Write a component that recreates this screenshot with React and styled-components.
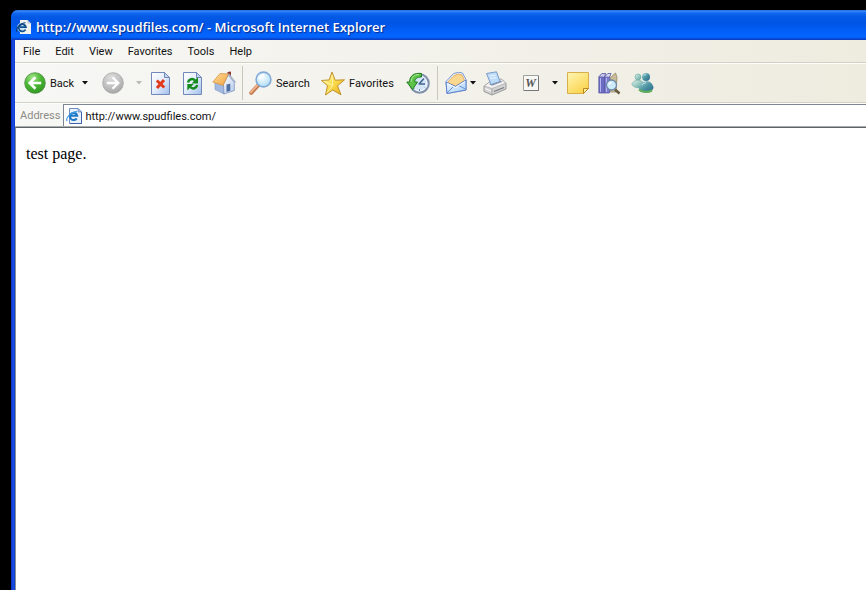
import React from 'react'
import styled, { createGlobalStyle } from 'styled-components'

const GlobalStyle = createGlobalStyle`
  * {
    box-sizing: border-box;
  }
  body {
    margin: 0;
    background: #000;
    overflow: hidden;
  }
  button, input {
    font-family: inherit;
    font-size: inherit;
    color: inherit;
  }
`

// black desktop that shows around the window
const Desktop = styled.div`
  height: 100vh;
  display: flex;
  padding: 10px 0 0 11px;
`

const Window = styled.div`
  flex: 1;
  min-width: 0;
  display: flex;
  flex-direction: column;
  overflow: hidden;
  border-top-left-radius: 7px;
  background: linear-gradient(90deg, #0a2ab8 0, #1c4fe6 2px, #0b3bd0 4px);
  font-family: Roboto, "Noto Sans", sans-serif;
  font-size: 11px;
  color: #111;
`

// ******* Title bar ********
const TitleBar = styled.header`
  flex: none;
  height: 30px;
  display: flex;
  align-items: center;
  gap: 4px;
  padding: 4px 0 0 5px;
  background: linear-gradient(
    #1b5fd8 0,
    #3c8cf8 1px,
    #1268f0 3px,
    #0358e4 7px,
    #0055e5 14px,
    #0261fb 22px,
    #0466ff 27px,
    #0845cf 29px,
    #0a3cc0 30px
  );
`

const Title = styled.h1`
  margin: 0;
  font-family: "Open Sans", "Noto Sans", sans-serif;
  font-size: 13px;
  line-height: 18px;
  font-weight: 600;
  color: #fff;
  text-shadow: 1px 1px 1px #0a2a8a;
  white-space: nowrap;
`

const Chrome = styled.div`
  flex: none;
  margin-left: 4px;
  background: linear-gradient(90deg, #f7f7f5 0, #f3f2ec 45%, #eeecdf 100%);
`

// ******* Menu ********
const MenuBar = styled.nav`
  height: 23px;
  display: flex;
  gap: 1px;
  padding-left: 1px;
  border-bottom: 1px solid #d3d1c3;
`

const MenuItem = styled.button`
  padding: 1px 7px 0;
  border: none;
  background: none;
  line-height: 21px;
`

// ******* Toolbar ********
const Toolbar = styled.div`
  height: 40px;
  display: flex;
  align-items: center;
  padding-left: 5px;
  border-top: 1px solid #fdfdfb;
  border-bottom: 1px solid #d3d1c3;
`

const ToolButton = styled.button`
  flex: none;
  width: ${(props) => props.$width}px;
  height: 34px;
  display: flex;
  align-items: center;
  justify-content: ${(props) => (props.$text ? 'flex-start' : 'center')};
  gap: 4px;
  padding: 0 0 0 ${(props) => (props.$text ? 4 : 0)}px;
  border: none;
  background: none;
  white-space: nowrap;

  svg {
    flex: none;
  }
`

const Separator = styled.span`
  flex: none;
  width: 1px;
  height: 34px;
  margin: 0 ${(props) => props.$after}px 0 2px;
  background: #c9c7b8;
`

// ******* Address ********
const AddressBar = styled.form`
  height: 24px;
  display: flex;
  border-top: 1px solid #fdfdfb;
  border-bottom: 1px solid #a9adab;
`

const AddressLabel = styled.label`
  padding: 0 3px 0 5px;
  line-height: 24px;
  color: #8c8b85;
`

const AddressBox = styled.div`
  flex: 1;
  display: flex;
  align-items: center;
  gap: 3px;
  padding-left: 2px;
  border-top: 1px solid #7d8794;
  border-left: 1px solid #7d8794;
  background: #fff;
`

const AddressInput = styled.input`
  flex: 1;
  min-width: 0;
  height: 20px;
  padding: 2px 0 0;
  border: none;
  outline: none;
  background: none;
`

const Page = styled.main`
  flex: 1;
  margin-left: 4px;
  padding: 16px 10px;
  border-top: 1px solid #5d6468;
  border-left: 1px solid #8a8f96;
  background: #fff;
  font-family: "Liberation Serif", serif;
  font-size: 16px;
  line-height: 20px;
  color: #000;
`

const Paragraph = styled.p`
  margin: 0;
`

const PageIcon = () => (
  <svg width="16" height="16" viewBox="0 0 16 16" aria-hidden="true">
    <path d="M3.500 .5h8.500l3.500 3.500v11.500h-12z" fill="#eaf1fb" stroke="#6d8cc4" />
    <path d="M4 15.500h11.500V4" fill="none" stroke="#3d62a8" />
    <path d="M12 .5V4h3.500z" fill="#a9c0e8" stroke="#5a7cba" strokeWidth=".6" />
    <path d="M10.700 10.400a3.600 3.600 0 1 1 .5-2.600H4.800" fill="none" stroke="#1f78c4" strokeWidth="2.100" />
    <path d="M1.200 13C-1 10.500 5 3.800 11 3.600" fill="none" stroke="#3b9ae0" strokeWidth="1.200" />
  </svg>
)

// darker variant without an outline for the blue title bar
const TitleIcon = () => (
  <svg width="16" height="16" viewBox="0 0 16 16" aria-hidden="true">
    <path d="M4 1h7.500L15 4.500V15H4z" fill="#f2f3ee" />
    <path d="M11.500 1v3.500H15z" fill="#b8c4d8" />
    <circle cx="6" cy="8.500" r="4.800" fill="#cfe6f8" />
    <path d="M9.500 10.600a3.600 3.600 0 1 1 .4-2.500H4" fill="none" stroke="#12508e" strokeWidth="1.800" />
    <path d="M1 13C-1 10.500 4 3.800 9.500 3.800" fill="none" stroke="#0d3f7c" strokeWidth="1.100" />
  </svg>
)

const Arrow = ({ color = '#111' }) => (
  <svg width="6" height="4" viewBox="0 0 6 4" aria-hidden="true">
    <path d="M0 0h6L3 3.500z" fill={color} />
  </svg>
)

const BackIcon = () => (
  <svg width="22" height="22" viewBox="0 0 23 23" aria-hidden="true">
    <defs>
      <radialGradient id="back" cx=".38" cy=".25" r=".8">
        <stop offset="0" stopColor="#a2e686" />
        <stop offset=".5" stopColor="#4cb835" />
        <stop offset="1" stopColor="#2f9422" />
      </radialGradient>
    </defs>
    <circle cx="11.500" cy="11.500" r="10.800" fill="url(#back)" stroke="#4b8c42" strokeWidth=".8" />
    <path d="M12 5.500l-6 6 6 6M6.500 11.500H18" fill="none" stroke="#fff" strokeWidth="2.800" />
  </svg>
)

const ForwardIcon = () => (
  <svg width="22" height="22" viewBox="0 0 23 23" aria-hidden="true">
    <defs>
      <radialGradient id="forward" cx=".4" cy=".25" r=".8">
        <stop offset="0" stopColor="#dcdcdc" />
        <stop offset=".6" stopColor="#bfbfbf" />
        <stop offset="1" stopColor="#a3a3a3" />
      </radialGradient>
    </defs>
    <circle cx="11.500" cy="11.500" r="10.800" fill="url(#forward)" stroke="#a6a6a6" strokeWidth=".8" />
    <path d="M11 5.500l6 6-6 6M16.500 11.500H5" fill="none" stroke="#fff" strokeWidth="2.400" />
  </svg>
)

const Sheet = ({ id }) => (
  <>
    <defs>
      <linearGradient id={id} x1="0" y1="0" x2="1" y2="1">
        <stop offset="0" stopColor="#fff" />
        <stop offset=".5" stopColor="#e3edfc" />
        <stop offset="1" stopColor="#9fbcec" />
      </linearGradient>
    </defs>
    <path d="M.5.500h13l5 5v17H.5z" fill={`url(#${id})`} stroke="#7389b8" />
    <path d="M13.500.500v5h5z" fill="#c5d5f0" stroke="#7389b8" />
  </>
)

const StopIcon = () => (
  <svg width="19" height="23" viewBox="0 0 19 23" aria-hidden="true">
    <Sheet id="stopSheet" />
    <path d="M5.800 8.500l7.500 7M13 8l-7 8" fill="none" stroke="#e23a1c" strokeWidth="3" />
  </svg>
)

const RefreshIcon = () => (
  <svg width="19" height="23" viewBox="0 0 19 23" aria-hidden="true">
    <Sheet id="refreshSheet" />
    <path d="M5 10.500c.8-3.500 4.700-4.500 7-2" fill="none" stroke="#178a1c" strokeWidth="2.500" />
    <path d="M15 5v6.500H8.500z" fill="#178a1c" />
    <path d="M14.200 13c-.8 3.500-4.700 4.500-7 2" fill="none" stroke="#178a1c" strokeWidth="2.500" />
    <path d="M4.300 18.500V12h6.500z" fill="#178a1c" />
  </svg>
)

const HomeIcon = () => (
  <svg width="24" height="24" viewBox="0 0 24 24" aria-hidden="true">
    <defs>
      <linearGradient id="roof" x1="0" y1="0" x2="1" y2="1">
        <stop offset="0" stopColor="#ffdd9c" />
        <stop offset="1" stopColor="#f0a03c" />
      </linearGradient>
      <linearGradient id="front" x1="0" y1="0" x2="1" y2="1">
        <stop offset="0" stopColor="#fff" />
        <stop offset="1" stopColor="#b4c9ec" />
      </linearGradient>
    </defs>
    <path d="M15.500 1l3.500-.5V6l-3.500-1.500z" fill="#8e3a2c" />
    <path d="M3 11.500L11.500 13l.5 10-9-4.500z" fill="#a3b9e2" stroke="#7d93bd" strokeWidth=".6" />
    <path d="M11.500 13L16.300 4l6 7.500v8L12 23z" fill="url(#front)" stroke="#7d93bd" strokeWidth=".8" />
    <path d="M.8 11L8 2.500l8.500.5L11 14.500z" fill="url(#roof)" stroke="#d49548" strokeWidth=".8" />
    <path d="M16.500 3l7 8.500" stroke="#a7b4c8" strokeWidth="1.500" />
    <path d="M14.500 13.500l3.800-.8v7l-3.800 1.300z" fill="#4f6fa4" />
  </svg>
)

const SearchIcon = () => (
  <svg width="23" height="24" viewBox="0 0 23 24" aria-hidden="true">
    <defs>
      <radialGradient id="lens" cx=".4" cy=".35" r=".7">
        <stop offset="0" stopColor="#fff" />
        <stop offset="1" stopColor="#a9dcf6" />
      </radialGradient>
    </defs>
    <path d="M2.200 21.800l7.300-7.800" stroke="#c47a50" strokeWidth="4" strokeLinecap="round" />
    <path d="M1.800 21.300l7-7.500" stroke="#f2b48a" strokeWidth="1.800" strokeLinecap="round" />
    <circle cx="14.500" cy="8.500" r="7.400" fill="url(#lens)" stroke="#82a9d6" strokeWidth="1.600" />
    <path d="M10.500 8c.4-2.500 2.300-4 4.500-4" fill="none" stroke="#fff" strokeWidth="1.500" />
  </svg>
)

const StarIcon = () => (
  <svg width="24" height="25" viewBox="0 0 24 25" aria-hidden="true">
    <defs>
      <linearGradient id="star" x1="0" y1="0" x2="1" y2="1">
        <stop offset="0" stopColor="#fff6a8" />
        <stop offset=".5" stopColor="#fbdc4c" />
        <stop offset="1" stopColor="#eaa91c" />
      </linearGradient>
    </defs>
    <path
      d="M11 1l3.200 8.200 9.300-.4-7 6 3.500 9-8.300-4.800L4.500 24l2-9.300L.5 9.500l7.700-.6z"
      fill="url(#star)"
      stroke="#c0922c"
      strokeLinejoin="round"
    />
    <path d="M11 4l.8 10.500L2.500 10M11.800 14.500L6 21.500" fill="none" stroke="#fff8c4" strokeWidth=".8" />
  </svg>
)

const HistoryIcon = () => (
  <svg width="24" height="23" viewBox="0 0 24 23" aria-hidden="true">
    <circle cx="13.500" cy="11.500" r="9.300" fill="#d4e5f8" stroke="#8090a8" strokeWidth="2" />
    <circle cx="13.500" cy="11.500" r="7.300" fill="none" stroke="#f5f9ff" />
    <path d="M13 12l5-5.500M12.500 12h6.500" stroke="#44658f" strokeWidth="1.500" />
    <path d="M13.500 17v2M19 15.500l1 1M8.500 16l-1 1" stroke="#6c86aa" />
    <path
      d="M15.500 1.500C8 .5 3.500 4 3.700 10H.8l5.700 7.500 5-7.500H8.700c0-3 2-5 6.800-5z"
      fill="#5cc348"
      stroke="#217a22"
      strokeLinejoin="round"
    />
    <path d="M13 2.500C8 2.600 5.200 5.500 5 10" fill="none" stroke="#b2eb9c" />
  </svg>
)

const MailIcon = () => (
  <svg width="22" height="24" viewBox="0 0 22 24" aria-hidden="true">
    <defs>
      <linearGradient id="envelope" x1="0" y1="0" x2="1" y2="1">
        <stop offset="0" stopColor="#f2f9ff" />
        <stop offset="1" stopColor="#a8d0f8" />
      </linearGradient>
    </defs>
    <path d="M1 10.500L8.500 2.500Q14 .5 17.500 2L21 8.500v10.500L2 22.500z" fill="#e8effa" stroke="#7d9ad0" />
    <path d="M2.500 11.500L9 4.500Q14 2 17 4l2.500 5.500-9 5.500z" fill="#fbd790" stroke="#e0a550" strokeWidth=".8" />
    <path d="M1 11l9.500 4.500L21 9v10L2 22.500z" fill="url(#envelope)" stroke="#5b80cc" strokeLinejoin="round" />
    <path d="M2 22l7-7M13 14l8 4.500" fill="none" stroke="#6a90d4" />
    <path d="M2.500 12.500l8 4L20 10.500" fill="none" stroke="#fff" />
  </svg>
)

const PrintIcon = () => (
  <svg width="24" height="25" viewBox="0 0 24 25" aria-hidden="true">
    <path d="M1 15L6 11.500l12-3.500 5 4v6L9 24l-8-3.500z" fill="#d2d2d2" stroke="#9a9a9a" strokeLinejoin="round" />
    <path d="M1 15L6 11.500l12-3.500 5 4-14 5.500z" fill="#f3f3f3" stroke="#a6a6a6" strokeWidth=".7" />
    <path d="M6 13l11.500-3.500 2 1.300L9 14.800z" fill="#8b93a2" />
    <path d="M3.500 2.500L13.500.800 17 10.500l-9 3z" fill="#bcdcfa" stroke="#7c9ac6" />
    <path d="M6.500 5l6-1M7.300 7.500l6-1" stroke="#eef6ff" />
    <path d="M9 18v6" stroke="#a4a4a4" />
    <path d="M11 20.500l10-4" stroke="#77797e" strokeWidth="1.300" />
    <path d="M2 17.500l6 2.500" stroke="#fff" />
  </svg>
)

const WordIcon = () => (
  <svg width="16" height="16" viewBox="0 0 16 16" aria-hidden="true">
    <path d="M.5.500h15v15H.5z" fill="#f7f7f5" stroke="#a0a09c" />
    <path d="M1 15.500h14.500V1" fill="none" stroke="#777" />
    <text x="7.500" y="12" textAnchor="middle" fontFamily="Liberation Serif, serif" fontStyle="italic" fontWeight="700" fontSize="12" fill="#555">
      W
    </text>
  </svg>
)

const NoteIcon = () => (
  <svg width="22" height="22" viewBox="0 0 22 22" aria-hidden="true">
    <defs>
      <linearGradient id="note" x1="0" y1="0" x2=".7" y2="1">
        <stop offset="0" stopColor="#fff6b4" />
        <stop offset="1" stopColor="#fbd34c" />
      </linearGradient>
    </defs>
    <path d="M.5.500h21v16l-5 5H.5z" fill="url(#note)" stroke="#d9ae4c" />
    <path d="M16.500 21.500v-5h5z" fill="#fff0a0" stroke="#b98622" />
  </svg>
)

const ResearchIcon = () => (
  <svg width="23" height="23" viewBox="0 0 23 23" aria-hidden="true">
    <path d="M.8 5L4 1.500h3.500L6.500 5v16H.8z" fill="#6d6cc4" stroke="#55549a" strokeWidth=".7" />
    <path d="M.8 5L4 1.500h3.500L6.500 5z" fill="#c9c8ee" stroke="#55549a" strokeWidth=".6" />
    <path d="M6.500 5L10 1.500h3L11.500 5v16h-5z" fill="#7c7ad2" stroke="#55549a" strokeWidth=".7" />
    <path d="M6.500 5L10 1.500h3L11.500 5z" fill="#dcdbf4" stroke="#55549a" strokeWidth=".6" />
    <path d="M2.500 6v14M8.500 6v14" stroke="#b5b3f0" />
    <path d="M12.500 5.500L17.500 1l1.500 4-1 15h-5.500z" fill="#c9bb98" stroke="#8a7c5c" strokeWidth=".7" />
    <path d="M17 17.500l4.500 4" stroke="#66593f" strokeWidth="2.600" />
    <circle cx="13.500" cy="13" r="5" fill="#cdebfa" stroke="#6c89a8" strokeWidth="1.300" />
    <path d="M11 12.500c.3-1.500 1.200-2.200 2.500-2.200" fill="none" stroke="#fff" strokeWidth="1.300" />
  </svg>
)

const MessengerIcon = () => (
  <svg width="23" height="22" viewBox="0 0 23 22" aria-hidden="true">
    <defs>
      <linearGradient id="buddy" x1="0" y1="0" x2="1" y2="1">
        <stop offset="0" stopColor="#a4d2d8" />
        <stop offset=".5" stopColor="#4a93a0" />
        <stop offset="1" stopColor="#2a5f90" />
      </linearGradient>
      <linearGradient id="friend" x1="0" y1="0" x2="1" y2="1">
        <stop offset="0" stopColor="#e2f5f2" />
        <stop offset="1" stopColor="#58a296" />
      </linearGradient>
    </defs>
    <circle cx="7" cy="5" r="3" fill="url(#friend)" stroke="#69a6a4" strokeWidth=".6" />
    <path d="M.8 12c1.500-4 8-5 11-2l-2 6c-4 0-8-1-9-4z" fill="url(#friend)" stroke="#69a6a4" strokeWidth=".6" />
    <circle cx="15" cy="5" r="4" fill="url(#buddy)" />
    <path d="M8 18C7.500 8 20.500 6 22.500 15.500c-1 6-11 7-14.500 2.500z" fill="url(#buddy)" />
    <path d="M8 17.500c3 3 9 3 13 1" fill="none" stroke="#5fae58" strokeWidth="2" />
    <path d="M13 3.500c.6-.8 1.400-1 2.200-.9M11 13c1-1.500 2.500-2.200 4-2.200" fill="none" stroke="#c4e9ef" />
  </svg>
)

const menus = ['File', 'Edit', 'View', 'Favorites', 'Tools', 'Help']

const App = () => {
  const [address, setAddress] = React.useState('http://www.spudfiles.com/')

  return (
    <Desktop>
      <GlobalStyle />
      <Window>
        <TitleBar>
          <TitleIcon />
          <Title>http://www.spudfiles.com/ - Microsoft Internet Explorer</Title>
        </TitleBar>
        <Chrome>
          <MenuBar>
            {menus.map((menu) => (
              <MenuItem key={menu} type="button">{menu}</MenuItem>
            ))}
          </MenuBar>
          <Toolbar>
            <ToolButton $width={58} $text><BackIcon />Back</ToolButton>
            <ToolButton $width={14} aria-label="Back history"><Arrow /></ToolButton>
            <ToolButton $width={42} aria-label="Forward"><ForwardIcon /></ToolButton>
            <ToolButton $width={10} aria-label="Forward history"><Arrow color="#b9b9b4" /></ToolButton>
            <ToolButton $width={32} aria-label="Stop"><StopIcon /></ToolButton>
            <ToolButton $width={32} aria-label="Refresh"><RefreshIcon /></ToolButton>
            <ToolButton $width={32} aria-label="Home"><HomeIcon /></ToolButton>
            <Separator $after={2} />
            <ToolButton $width={72} $text><SearchIcon />Search</ToolButton>
            <ToolButton $width={84} $text><StarIcon />Favorites</ToolButton>
            <ToolButton $width={34} aria-label="History"><HistoryIcon /></ToolButton>
            <Separator $after={4} />
            <ToolButton $width={28} aria-label="Mail"><MailIcon /></ToolButton>
            <ToolButton $width={6} aria-label="Mail options"><Arrow /></ToolButton>
            <ToolButton $width={38} aria-label="Print"><PrintIcon /></ToolButton>
            <ToolButton $width={34} aria-label="Edit with Word"><WordIcon /></ToolButton>
            <ToolButton $width={14} aria-label="Edit options"><Arrow /></ToolButton>
            <ToolButton $width={32} aria-label="Discuss"><NoteIcon /></ToolButton>
            <ToolButton $width={30} aria-label="Research"><ResearchIcon /></ToolButton>
            <ToolButton $width={36} aria-label="Messenger"><MessengerIcon /></ToolButton>
          </Toolbar>
          <AddressBar onSubmit={(e) => e.preventDefault()}>
            <AddressLabel htmlFor="address">Address</AddressLabel>
            <AddressBox>
              <PageIcon />
              <AddressInput
                id="address"
                value={address}
                onChange={(e) => setAddress(e.target.value)}
              />
            </AddressBox>
          </AddressBar>
        </Chrome>
        <Page>
          <Paragraph>test page.</Paragraph>
        </Page>
      </Window>
    </Desktop>
  )
}

export default App
